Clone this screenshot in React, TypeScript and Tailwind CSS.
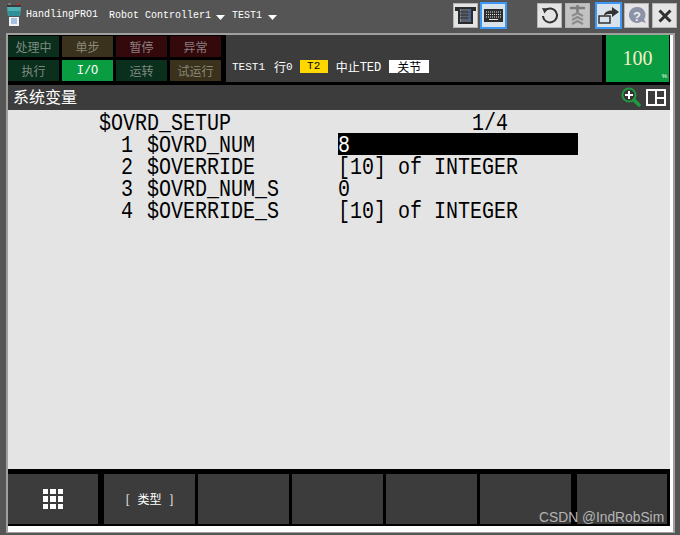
import type { ReactNode } from "react";

const mono = "font-['Liberation_Mono','Noto_Sans_CJK_SC',monospace]";
const cjk = "font-['Noto_Sans_CJK_SC',sans-serif]";
const tall = "block translate-y-[4px] scale-y-[1.2] whitespace-pre leading-[18px]";

const statusCells = [
  { label: "处理中", bg: "bg-[#0a2f1c]", fg: "text-[#7d8a82]" },
  { label: "单步", bg: "bg-[#3a321c]", fg: "text-[#8b8878]" },
  { label: "暂停", bg: "bg-[#33090c]", fg: "text-[#8c7f80]" },
  { label: "异常", bg: "bg-[#33090c]", fg: "text-[#8c7f80]" },
  { label: "执行", bg: "bg-[#0a2f1c]", fg: "text-[#7d8a82]" },
  { label: "I/O", bg: "bg-[#0a9c41]", fg: "text-white" },
  { label: "运转", bg: "bg-[#0a2f1c]", fg: "text-[#7d8a82]" },
  { label: "试运行", bg: "bg-[#3a321c]", fg: "text-[#8b8878]" },
];

const rows = [
  { n: "1", name: "$OVRD_NUM", value: "8", active: true },
  { n: "2", name: "$OVERRIDE", value: "[10] of INTEGER" },
  { n: "3", name: "$OVRD_NUM_S", value: "0" },
  { n: "4", name: "$OVERRIDE_S", value: "[10] of INTEGER" },
];

function Caret() {
  return (
    <svg width="9" height="5" viewBox="0 0 9 5">
      <path d="M0 0h9L4.5 5z" fill="#fff" />
    </svg>
  );
}

function ToolButton({ children, active, dim }: { children: ReactNode; active?: boolean; dim?: boolean }) {
  return (
    <div
      className={`flex items-center justify-center ${
        active
          ? "h-[27px] w-[27px] border-2 border-[#3d97f5] bg-[#d8e2ea]"
          : `h-[25px] w-[25px] border border-[#b5b5b5] ${dim ? "bg-[#c2c2c2]" : "bg-[#e4e4e4]"}`
      }`}
    >
      {children}
    </div>
  );
}

function TabletIcon() {
  return (
    <svg width="21" height="19" viewBox="0 0 21 19">
      <path d="M0 1h21v4h-3v13H3V5H0z" fill="#2b2b2b" />
      <rect x="5" y="3" width="11" height="13" fill="#8a97a8" />
      <path d="M7 3v13M9 3v13M11 3v13M13 3v13M15 3v13" stroke="#2b2b2b" strokeWidth="1" />
      <path d="M5 6h11M5 9h11M5 12h11" stroke="#2b2b2b" strokeWidth="1" />
      <rect x="13" y="3" width="3" height="13" fill="#4a68a8" opacity="0.6" />
    </svg>
  );
}

function KeyboardIcon() {
  return (
    <svg width="19" height="13" viewBox="0 0 19 13">
      <rect width="19" height="13" fill="#2c2c2c" />
      <path d="M2 3h15M2 5.500h15" stroke="#e8e8e8" strokeWidth="1" strokeDasharray="1 1" />
      <path d="M2 8h15" stroke="#e8e8e8" strokeWidth="1" strokeDasharray="1 1" />
      <path d="M5 10.500h9" stroke="#e8e8e8" strokeWidth="1" />
    </svg>
  );
}

function ZoomIcon() {
  return (
    <svg className="mb-[2px]" width="20" height="20" viewBox="0 0 20 20">
      <circle cx="8" cy="8" r="6.500" fill="#333" stroke="#1f9a3e" strokeWidth="2" />
      <path d="M8 4v8M4 8h8" stroke="#fff" strokeWidth="2" />
      <path d="M13 13l5 5" stroke="#1f9a3e" strokeWidth="3.500" strokeLinecap="round" />
    </svg>
  );
}

export default function App() {
  return (
    <div className="flex h-[535px] w-[680px] flex-col overflow-hidden bg-[#555555]">
      {/* window title bar */}
      <div className="flex h-[33px] shrink-0 items-center whitespace-nowrap pb-[2px] text-white">
        <svg className="mb-[3px] ml-[7px] shrink-0" width="14" height="23" viewBox="0 0 14 23">
          <rect x="1" y="0" width="3" height="3" fill="#777777" />
          <rect x="10" y="0" width="3" height="3" fill="#b03030" />
          <rect x="0" y="2" width="14" height="2" fill="#3a3a3a" />
          <path d="M0 4h14l-1 9H1z" fill="#4fb0b4" />
          <path d="M1 8h12l-.5 5h-11z" fill="#2f8f98" />
          <rect x="2" y="14" width="10" height="9" fill="#eef3f7" />
          <path d="M4 16h6M4 18h6M4 20h6" stroke="#5f93c4" strokeWidth="1" />
        </svg>
        <span className={`${mono} mb-[3px] ml-[5px] text-[10px]`}>HandlingPRO1</span>
        <span className={`${mono} ml-[11px] text-[10px]`}>Robot Controller1</span>
        <span className="ml-[5px] mt-[3px]"><Caret /></span>
        <span className={`${mono} ml-[7px] text-[10px]`}>TEST1</span>
        <span className="ml-[6px] mt-[3px]"><Caret /></span>
        <div className="ml-[176px] flex items-center gap-[2px] text-black">
          <ToolButton><TabletIcon /></ToolButton>
          <ToolButton active><KeyboardIcon /></ToolButton>
        </div>
        <div className="ml-[30px] flex items-center gap-[3px]">
          <ToolButton>
            <svg width="19" height="19" viewBox="0 0 19 19">
              <path d="M5 4.500A7 7 0 1 1 3 10" fill="none" stroke="#333" strokeWidth="2" />
              <path d="M2 2l6 .5-3.500 5z" fill="#333" />
            </svg>
          </ToolButton>
          <ToolButton dim>
            <svg width="15" height="21" viewBox="0 0 15 21">
              <path d="M0 3h15M7.500 0v9" stroke="#7d7d7d" strokeWidth="2.500" />
              <path d="M2 11l5.500-3 5.500 3M2 15l5.500-3 5.500 3M2 19l5.500-3 5.500 3" fill="none" stroke="#8c8c8c" strokeWidth="2" />
            </svg>
          </ToolButton>
          <span className="ml-[2px] mr-[-1px]">
            <ToolButton active>
              <svg width="21" height="17" viewBox="0 0 21 17">
                <rect x="1" y="9" width="11" height="7" fill="none" stroke="#333" strokeWidth="1.500" />
                <path d="M6 9c0-4 4-5.500 8-5.500V0l7 5-7 5V7c-4 0-6 0-8 2z" fill="#333" />
              </svg>
            </ToolButton>
          </span>
          <ToolButton>
            <svg width="20" height="20" viewBox="0 0 20 20">
              <path d="M10 1a8 8 0 1 0 4.500 14.600L19 17l-2-3.500A8 8 0 0 0 10 1z" fill="#8a93a8" />
              <text x="10" y="14.500" textAnchor="middle" fontSize="13" fontWeight="700" fill="#eee" fontFamily="Liberation Sans">?</text>
            </svg>
          </ToolButton>
          <ToolButton>
            <svg width="14" height="14" viewBox="0 0 14 14">
              <path d="M1.500 1.500l11 11M12.500 1.500l-11 11" stroke="#2f2f2f" strokeWidth="3" />
            </svg>
          </ToolButton>
        </div>
      </div>

      {/* pendant screen frame */}
      <div className="ml-[6px] mr-[5px] mb-[2px] flex min-h-0 flex-1 flex-col border-t-2 border-r-2 border-b border-l-2 border-[#a0a0a0] bg-white pr-[3px] pb-[6px]">
        <div className="flex flex-1 flex-col bg-black">
          {/* status header */}
          <div className="flex h-[50px] shrink-0 items-stretch pb-[3px]">
            <div className="grid w-[218px] grid-cols-[51px_51px_51px_51px] grid-rows-[21px_21px] gap-[3px] py-[1px]">
              {statusCells.map((c) => (
                <div key={c.label} className={`${c.bg} ${c.fg} ${c.label === "I/O" ? mono : cjk} flex items-center justify-center text-[12px]`}>
                  {c.label}
                </div>
              ))}
            </div>
            <div className="flex w-[376px] items-end bg-[#3c3c3c] pb-[9px] pl-[6px] text-[11px] leading-[13px] text-white">
              <span className={`${mono} translate-y-[1px]`}>TEST1</span>
              <span className={`${cjk} ml-[9px] text-[12px]`}>行</span>
              <span className={`${mono} translate-y-[1px]`}>0</span>
              <span className={`${mono} ml-[7px] flex h-[13px] w-[28px] items-center justify-center bg-[#ffd800] text-black`}>T2</span>
              <span className={`${cjk} ml-[8px] text-[12px]`}>中止</span>
              <span className={`${mono} translate-y-[2px] text-[12px]`}>TED</span>
              <span className={`${cjk} ml-[8px] flex h-[13px] w-[40px] items-center justify-center bg-white text-[12px] text-black`}>关节</span>
            </div>
            <div className="relative ml-[4px] flex w-[63px] items-center justify-center bg-[#0a9c41] text-[#f4f0c8]">
              <span className="mb-[2px] font-['Liberation_Serif',serif] text-[20px]">100</span>
              <span className="absolute bottom-[1px] right-[2px] font-['Liberation_Sans',sans-serif] text-[6px] text-white">%</span>
            </div>
          </div>

          {/* screen title */}
          <div className="flex h-[25px] shrink-0 items-center bg-[#3c3c3c] pl-[5px] pr-[4px]">
            <span className={`${cjk} mb-[3px] text-[16px] leading-none text-white`}>系统变量</span>
            <div className="ml-auto flex items-center gap-[5px]">
              <ZoomIcon />
              <div className="grid h-[17px] w-[20px] grid-cols-2 grid-rows-2 gap-[2px] border-2 border-white bg-white">
                <div className="row-span-2 bg-[#3c3c3c]" />
                <div className="bg-[#3c3c3c]" />
                <div className="bg-[#3c3c3c]" />
              </div>
            </div>
          </div>

          {/* variable list */}
          <div className={`${mono} h-[359px] shrink-0 bg-[#e4e4e4] pt-[1px] text-[20px] text-black`}>
            <div className="flex h-[22px] pl-[91px]">
              <span className={tall}>$OVRD_SETUP</span>
              <span className={`${tall} ml-[241px]`}>1/4</span>
            </div>
            {rows.map((r) => (
              <div key={r.n} className="flex h-[22px]">
                <div className="w-[125px] text-right"><span className={tall}>{r.n}</span></div>
                <div className="ml-[14px] w-[191px]"><span className={tall}>{r.name}</span></div>
                <div className={r.active ? "w-[240px] bg-black text-white" : ""}><span className={tall}>{r.value}</span></div>
              </div>
            ))}
          </div>

          {/* softkeys */}
          <div className="relative mt-[5px] flex h-[50px] shrink-0 text-white">
            <div className="flex w-[90px] items-center justify-center bg-[#3c3c3c]">
              <div className="grid grid-cols-3 gap-[2px]">
                {Array.from({ length: 9 }).map((_, i) => (
                  <div key={i} className="h-[5.500px] w-[5.500px] bg-white" />
                ))}
              </div>
            </div>
            <div className={`${cjk} ml-[6px] flex w-[91px] items-center justify-center gap-[8px] bg-[#3c3c3c] text-[12px]`}>
              <span>[</span>
              <span>类型</span>
              <span>]</span>
            </div>
            <div className="ml-[3px] w-[91px] bg-[#3c3c3c]" />
            <div className="ml-[3px] w-[91px] bg-[#3c3c3c]" />
            <div className="ml-[3px] w-[91px] bg-[#3c3c3c]" />
            <div className="ml-[3px] w-[91px] bg-[#3c3c3c]" />
            <div className="ml-[6px] w-[90px] bg-[#3c3c3c]" />
            <span className="absolute bottom-[-5px] left-[531px] font-['Liberation_Sans',sans-serif] text-[13.800px] text-[#b4b4b4]">CSDN @IndRobSim</span>
          </div>
        </div>
      </div>
    </div>
  );
}
